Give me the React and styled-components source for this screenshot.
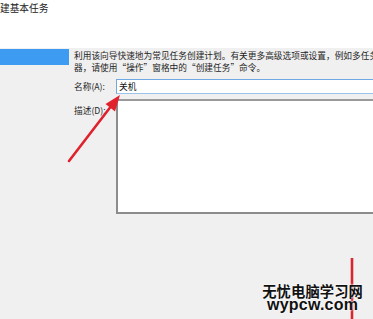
import React from "react";
import styled, { createGlobalStyle } from "styled-components";

const Global = createGlobalStyle`
  html, body { margin: 0; padding: 0; }
  body { width: 373px; height: 319px; overflow: hidden; background: #f0f0f0; }
  #root { width: 373px; height: 319px; }
`;

const Page = styled.div`
  position: relative;
  width: 373px;
  height: 319px;
  overflow: hidden;
  background: #f0f0f0;
  font-family: "Noto Sans CJK SC", "Noto Sans", sans-serif;
  color: #1a1a1a;
  display: flex;
  flex-direction: column;
`;

const Header = styled.header`
  height: 48px;
  flex: none;
  background: #ffffff;
  box-sizing: border-box;
  padding-top: 1px;
`;

const Title = styled.h1`
  margin: 0;
  font-weight: 400;
  font-size: 9.7px;
  line-height: 14px;
  color: #222;
`;

const Body = styled.div`
  flex: 1;
  display: flex;
`;

const Sidebar = styled.nav`
  width: 70px;
  flex: none;
  padding-top: 1px;
`;

const Step = styled.div`
  height: 16px;
  width: 69px;
  background: ${(p) => (p.$active ? "#3d9bf2" : "transparent")};
`;

const Content = styled.main`
  flex: 1;
  min-width: 0;
  padding: 1.5px 0 0 4px;
  display: flex;
  flex-direction: column;
`;

const Intro = styled.p`
  margin: 0;
  font-size: 8.7px;
  line-height: 12px;
  white-space: nowrap;
  color: #1e1e1e;
`;

const Row = styled.div`
  display: flex;
  align-items: flex-start;
  margin-top: ${(p) => p.$gap}px;
`;

const Label = styled.label`
  width: 42px;
  flex: none;
  font-size: 8.7px;
  line-height: 12px;
  padding-top: ${(p) => p.$pt}px;
  white-space: nowrap;
  color: #1e1e1e;
`;

const TextInput = styled.div`
  width: 290px;
  flex: none;
  height: 15px;
  box-sizing: border-box;
  background: #fff;
  border-top: 1px solid #6fa9e4;
  border-left: 1px solid #6fa9e4;
  border-bottom: 1px solid #9cc3ea;
  font-size: 8.7px;
  line-height: 12px;
  padding: 1px 0 0 2px;
  color: #111;
`;

const TextArea = styled.div`
  width: 290px;
  flex: none;
  height: 115px;
  box-sizing: border-box;
  background: #fff;
  border-top: 2px solid #9a9a9a;
  border-left: 2px solid #8c8c8c;
  border-bottom: 2px solid #8c8c8c;
`;

const Overlay = styled.svg`
  position: absolute;
  left: 0;
  top: 0;
  width: 373px;
  height: 319px;
  pointer-events: none;
`;

const Watermark = styled.div`
  position: absolute;
  right: 10px;
  bottom: 7px;
  display: flex;
  flex-direction: column;
  align-items: center;
  color: #111;
  font-weight: 700;
  text-shadow: 0 0 2px #fff, 0 0 2px #fff;
`;

const MarkCn = styled.div`
  font-family: "Noto Sans CJK SC", sans-serif;
  font-size: 14.3px;
  line-height: 15px;
  letter-spacing: 0.1px;
`;

const MarkEn = styled.div`
  font-family: "Liberation Sans", Arial, sans-serif;
  font-size: 16px;
  line-height: 14px;
  letter-spacing: 0.2px;
`;

export default function App() {
  return (
    <>
      <Global />
      <Page>
        <Header>
          <Title>建基本任务</Title>
        </Header>
        <Body>
          <Sidebar>
            <Step $active />
          </Sidebar>
          <Content>
            <Intro>
              利用该向导快速地为常见任务创建计划。有关更多高级选项或设置，例如多任务
              <br />
              器，请使用“操作”窗格中的“创建任务”命令。
            </Intro>
            <Row $gap={5.5}>
              <Label $pt={1.5}>名称(A):</Label>
              <TextInput>关机</TextInput>
            </Row>
            <Row $gap={5}>
              <Label $pt={6}>描述(D):</Label>
              <TextArea />
            </Row>
          </Content>
        </Body>
        <Overlay viewBox="0 0 373 319">
          <line x1="352" y1="258" x2="352" y2="319" stroke="#d8262e" strokeWidth="2.6" />
          <line x1="69" y1="161" x2="112" y2="105" stroke="#e0222c" strokeWidth="2.6" strokeLinecap="round" />
          <polygon points="120,95 115,111.5 105.5,104" fill="#e0222c" />
        </Overlay>
        <Watermark>
          <MarkCn>无忧电脑学习网</MarkCn>
          <MarkEn>wypcw.com</MarkEn>
        </Watermark>
      </Page>
    </>
  );
}
